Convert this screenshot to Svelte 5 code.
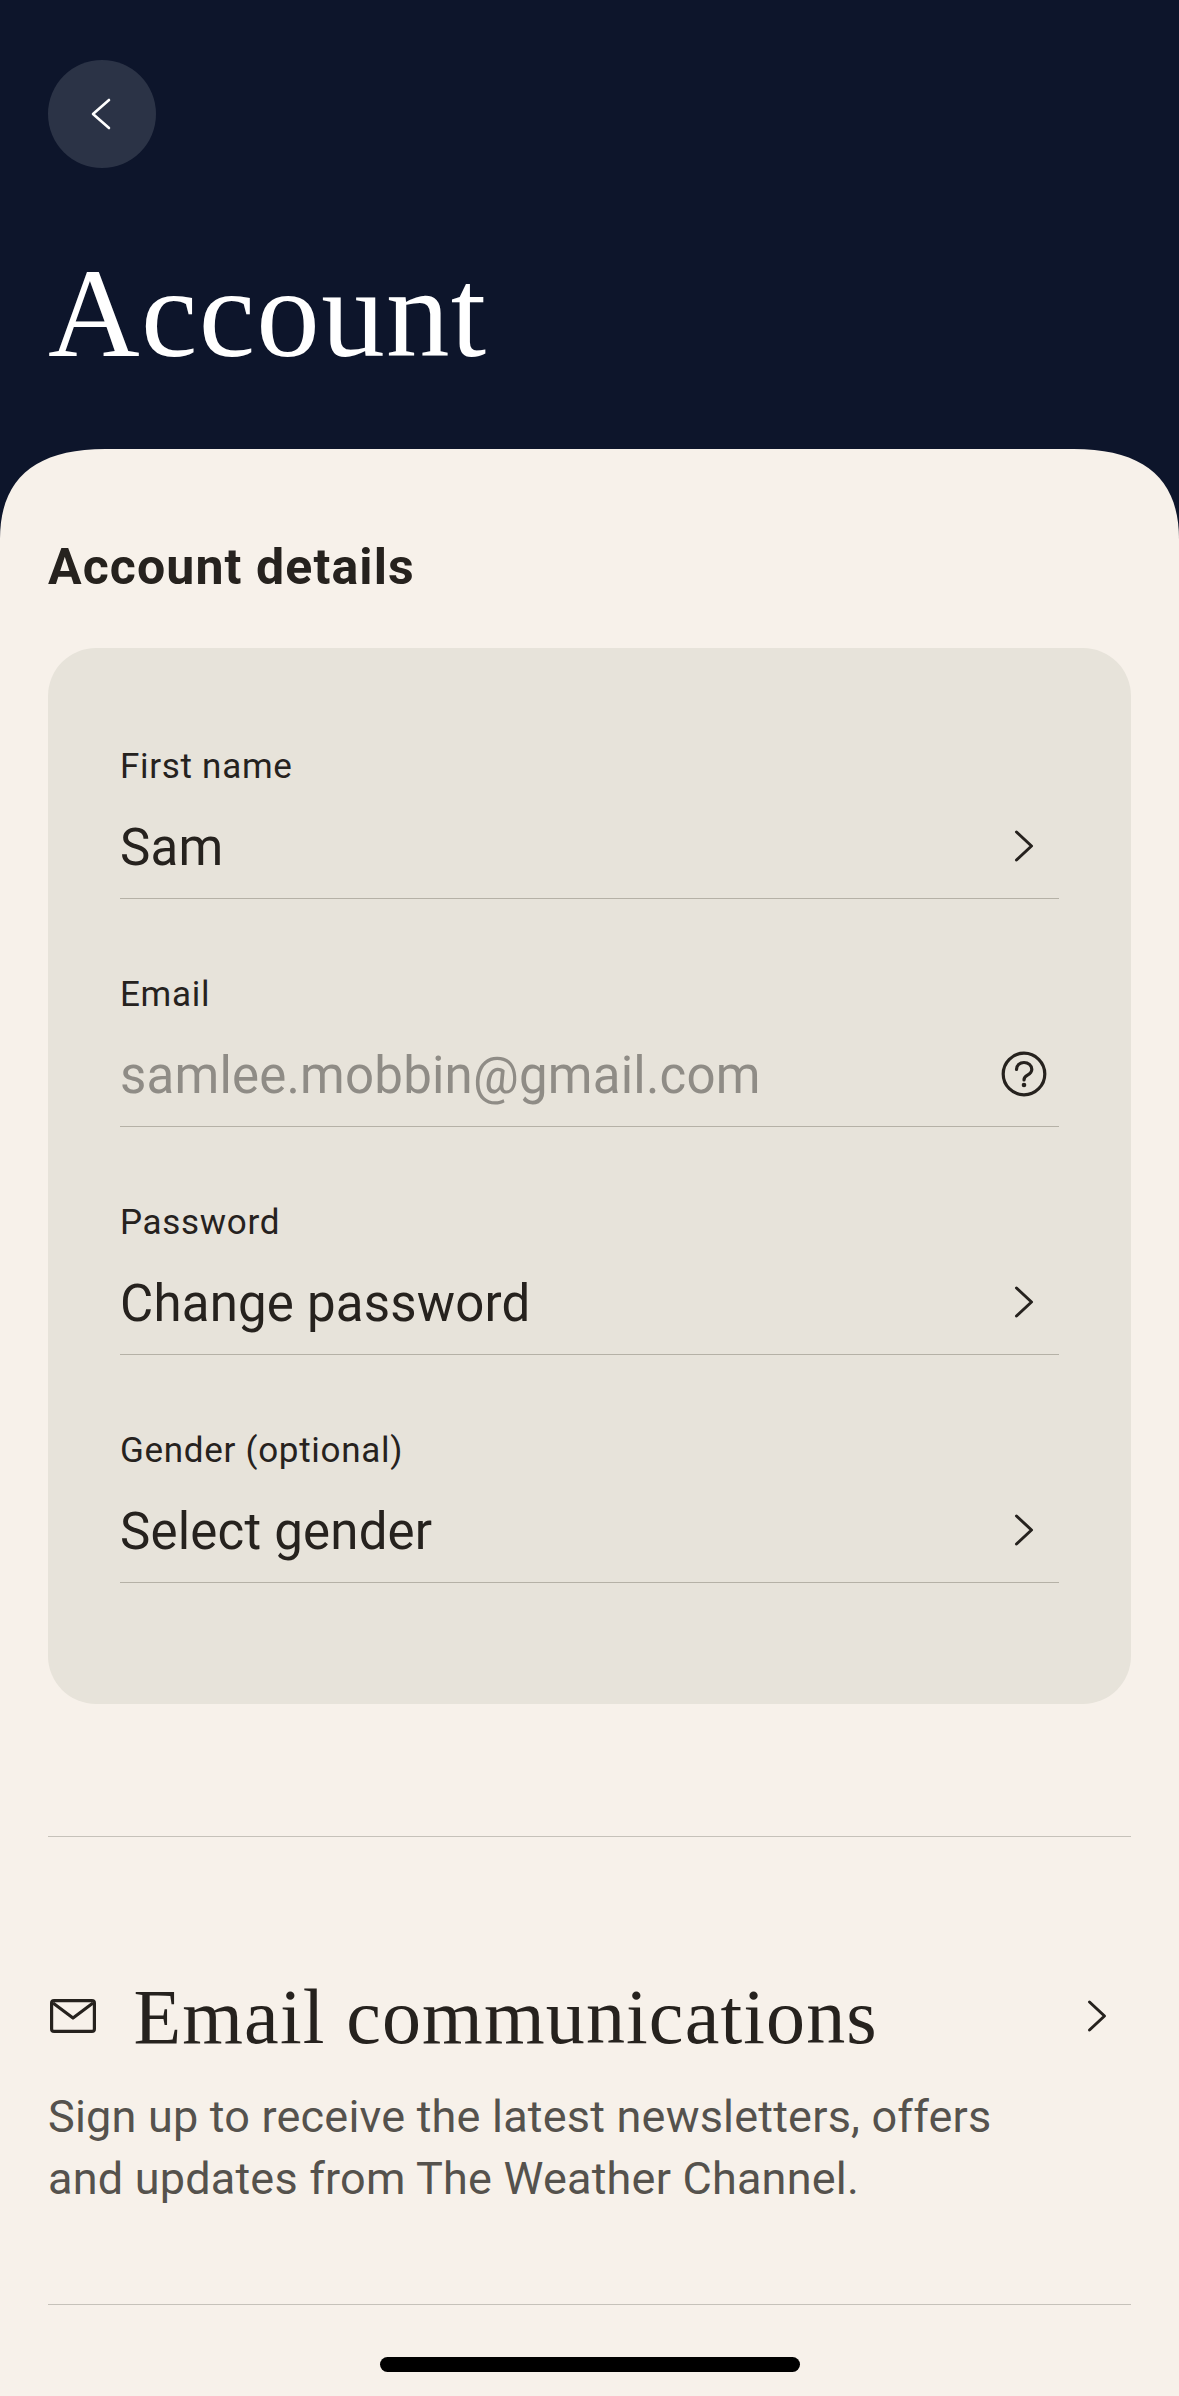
<script>
  const fields = [
    { label: 'First name', value: 'Sam', icon: 'chevron' },
    { label: 'Email', value: 'samlee.mobbin@gmail.com', icon: 'help', muted: true },
    { label: 'Password', value: 'Change password', icon: 'chevron' },
    { label: 'Gender (optional)', value: 'Select gender', icon: 'chevron' }
  ];
</script>

<div class="page">
  <header class="hero">
    <button class="back" aria-label="Back">
      <svg width="22" height="34" viewBox="0 0 22 34" fill="none"><path d="M19 3 3 17 19 31" stroke="#fff" stroke-width="2.6" stroke-linecap="round" stroke-linejoin="round"/></svg>
    </button>
    <h1>Account</h1>
  </header>

  <main class="sheet">
    <h2>Account details</h2>
    <section class="card">
      {#each fields as f}
        <div class="field">
          <div class="label">{f.label}</div>
          <div class="row">
            <span class="value" class:muted={f.muted}>{f.value}</span>
            {#if f.icon === 'chevron'}
              <svg class="chev" width="22" height="36" viewBox="0 0 22 36" fill="none"><path d="M3.500 4 18.500 18 3.500 32" stroke="#26221e" stroke-width="3" stroke-linecap="round" stroke-linejoin="round"/></svg>
            {:else}
              <svg class="help" width="46" height="46" viewBox="0 0 46 46" fill="none"><circle cx="23" cy="23" r="20.800" stroke="#26221e" stroke-width="3.200"/><path d="M15.500 18.500c0-4.200 3.300-7 7.500-7s7.800 2.800 7.800 6.800c0 3.500-2.300 4.800-4.300 5.900-2.200 1.200-3.500 2.200-3.500 4.800" stroke="#26221e" stroke-width="3.200" stroke-linecap="round"/><circle cx="23" cy="34" r="2.300" fill="#26221e"/></svg>
            {/if}
          </div>
        </div>
      {/each}
    </section>

    <hr class="rule first" />

    <section class="comm">
      <div class="comm-head">
        <svg class="mail" width="46" height="34" viewBox="0 0 46 34" fill="none"><rect x="1.600" y="1.600" width="42.800" height="30.800" rx="2.500" stroke="#26221e" stroke-width="3.200"/><path d="M3 4 23 19 43 4" stroke="#26221e" stroke-width="3.200" stroke-linejoin="round"/></svg>
        <h3>Email communications</h3>
        <svg class="chev" width="22" height="36" viewBox="0 0 22 36" fill="none"><path d="M3.500 4 18.500 18 3.500 32" stroke="#26221e" stroke-width="3" stroke-linecap="round" stroke-linejoin="round"/></svg>
      </div>
      <p>Sign up to receive the latest newsletters, offers<br />and updates from The Weather Channel.</p>
    </section>

    <hr class="rule" />
  </main>
  <div class="home"></div>
</div>

<style>
  :global(body) { margin: 0; background: #f7f1ea; }
  .page {
    position: relative;
    width: 1179px;
    height: 2396px;
    overflow: hidden;
    background: #0d152b;
    font-family: Roboto, sans-serif;
    color: #26221e;
  }
  .hero {
    height: 449px;
    box-sizing: border-box;
    padding: 60px 48px 0;
  }
  .back {
    display: flex;
    align-items: center;
    justify-content: center;
    width: 108px;
    height: 108px;
    padding: 0 3px 0 0;
    border: 0;
    border-radius: 50%;
    background: #2b3346;
  }
  h1 {
    margin: 80px 0 0;
    font-family: "Liberation Serif", serif;
    font-weight: 400;
    font-size: 127px;
    line-height: 130px;
    letter-spacing: 1.3px;
    color: #fff;
  }
  .sheet {
    height: 1947px;
    box-sizing: border-box;
    padding: 88px 48px 0;
    background: #f7f1ea;
    clip-path: path("M0 90C0 30 35 0 105 0L1074 0C1144 0 1179 30 1179 90L1179 1947L0 1947Z");
  }
  h2 {
    margin: 0;
    font-size: 50px;
    line-height: 60px;
    font-weight: 700;
    letter-spacing: 1.100px;
  }
  .card {
    margin-top: 51px;
    height: 1056px;
    box-sizing: border-box;
    padding: 97px 72px 0;
    background: #e7e3da;
    border-radius: 48px;
  }
  .field {
    height: 154px;
    margin-bottom: 74px;
    box-sizing: border-box;
    border-bottom: 1.500px solid #b5b1a6;
  }
  .label {
    font-size: 35px;
    line-height: 44px;
    letter-spacing: 0.700px;
  }
  .row {
    display: flex;
    align-items: center;
    justify-content: space-between;
    height: 70px;
    margin-top: 24px;
  }
  .value { font-size: 51px; line-height: 70px; letter-spacing: 0.200px; }
  .muted { color: #8f8c86; }
  .row .chev { margin: 0 24px 4px 0; }
  .row .help { margin: 0 12.500px 4px 0; }
  .rule {
    margin: 0;
    height: 0;
    border: 0;
    border-top: 1.500px solid #c6c2ba;
  }
  .rule.first { margin-top: 132px; }
  .comm { height: 466.500px; box-sizing: border-box; padding-top: 137.500px; }
  .comm-head { display: flex; align-items: center; height: 84px; }
  .mail { flex: none; margin: 0 0 2px 2px; }
  h3 {
    flex: 1;
    margin: 0 0 0 37.500px;
    font-family: "Liberation Serif", serif;
    font-weight: 400;
    font-size: 78px;
    line-height: 84px;
    letter-spacing: 1.150px;
  }
  .comm-head .chev { margin: 0 23px 2px 0; }
  p {
    margin: 27px 0 0;
    font-size: 45px;
    line-height: 62.500px;
    letter-spacing: 0.200px;
    color: #55524d;
  }
  .home {
    position: absolute;
    left: 380px;
    top: 2357px;
    width: 420px;
    height: 15px;
    border-radius: 8px;
    background: #000;
  }
</style>
